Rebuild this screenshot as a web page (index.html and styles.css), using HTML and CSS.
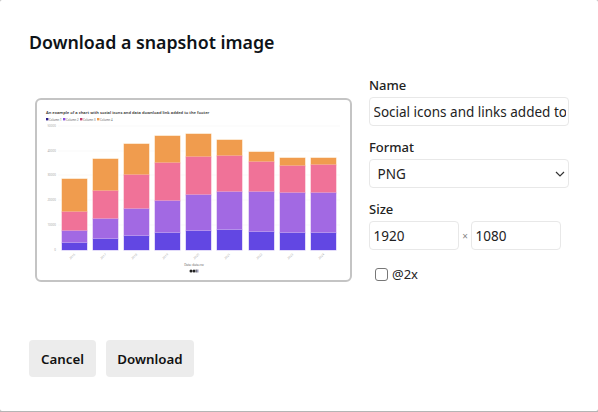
FILE: index.html
```html
<!DOCTYPE html>
<html lang="en">
<head>
<meta charset="utf-8">
<title>Download a snapshot image</title>
<link rel="stylesheet" href="styles.css">
</head>
<body>
<main class="dialog">
  <h1 class="title">Download a snapshot image</h1>
  <div class="content">
    <figure class="preview">
      <svg class="chart" viewBox="35 98 317 184" width="317" height="184" role="img">
        <text class="c-title" x="46" y="113.7">An example of a chart with social icons and data download link added to the footer</text>
        <g class="c-legend">
          <rect x="46" y="118" width="2.4" height="2.4" fill="#2a1a8a"/><text x="49" y="120.5">Column 1</text>
          <rect x="63" y="118" width="2.4" height="2.4" fill="#8a4fe0"/><text x="66" y="120.5">Column 2</text>
          <rect x="80" y="118" width="2.4" height="2.4" fill="#c0406f"/><text x="83" y="120.5">Column 3</text>
          <rect x="97" y="118" width="2.4" height="2.4" fill="#f09c4e"/><text x="100" y="120.5">Column 4</text>
        </g>
        <g class="c-grid">
          <line x1="58" x2="340" y1="126" y2="126"/><line x1="58" x2="340" y1="151" y2="151"/>
          <line x1="58" x2="340" y1="175" y2="175"/><line x1="58" x2="340" y1="200" y2="200"/>
          <line x1="58" x2="340" y1="225" y2="225"/>
        </g>
        <g class="c-axis" text-anchor="end">
          <text x="56" y="127">50000</text><text x="56" y="152">40000</text><text x="56" y="176">30000</text>
          <text x="56" y="201">20000</text><text x="56" y="226">10000</text><text x="56" y="251">0</text>
        </g>
        <g class="s-orange">
          <rect x="62" y="179" width="25" height="33"/><rect x="93" y="159" width="25" height="32"/>
          <rect x="124" y="144" width="25" height="31"/><rect x="155" y="136" width="25" height="27"/>
          <rect x="186" y="134" width="25" height="23"/><rect x="217" y="140" width="25" height="16"/>
          <rect x="249" y="152" width="25" height="10"/><rect x="280" y="158" width="25" height="8"/>
          <rect x="311" y="158" width="25" height="7"/>
        </g>
        <g class="s-pink">
          <rect x="62" y="212" width="25" height="19"/><rect x="93" y="191" width="25" height="28"/>
          <rect x="124" y="175" width="25" height="34"/><rect x="155" y="163" width="25" height="38"/>
          <rect x="186" y="157" width="25" height="38"/><rect x="217" y="156" width="25" height="36"/>
          <rect x="249" y="162" width="25" height="30"/><rect x="280" y="166" width="25" height="27"/>
          <rect x="311" y="165" width="25" height="28"/>
        </g>
        <g class="s-purple">
          <rect x="62" y="231" width="25" height="12"/><rect x="93" y="219" width="25" height="20"/>
          <rect x="124" y="209" width="25" height="27"/><rect x="155" y="201" width="25" height="32"/>
          <rect x="186" y="195" width="25" height="36"/><rect x="217" y="192" width="25" height="38"/>
          <rect x="249" y="192" width="25" height="40"/><rect x="280" y="193" width="25" height="40"/>
          <rect x="311" y="193" width="25" height="40"/>
        </g>
        <g class="s-dark">
          <rect x="62" y="243" width="25" height="7"/><rect x="93" y="239" width="25" height="11"/>
          <rect x="124" y="236" width="25" height="14"/><rect x="155" y="233" width="25" height="17"/>
          <rect x="186" y="231" width="25" height="19"/><rect x="217" y="230" width="25" height="20"/>
          <rect x="249" y="232" width="25" height="18"/><rect x="280" y="233" width="25" height="17"/>
          <rect x="311" y="233" width="25" height="17"/>
        </g>
        <g class="c-ticks" text-anchor="middle">
          <text transform="translate(73 257) rotate(-45)">2016</text><text transform="translate(104 257) rotate(-45)">2017</text>
          <text transform="translate(135 257) rotate(-45)">2018</text><text transform="translate(166 257) rotate(-45)">2019</text>
          <text transform="translate(197 257) rotate(-45)">2020</text><text transform="translate(228 257) rotate(-45)">2021</text>
          <text transform="translate(260 257) rotate(-45)">2022</text><text transform="translate(291 257) rotate(-45)">2023</text>
          <text transform="translate(322 257) rotate(-45)">2024</text>
        </g>
        <text class="c-source" x="194" y="266" text-anchor="middle">Data: data.csv</text>
        <circle cx="191" cy="271" r="1.5" fill="#222"/><circle cx="194" cy="271" r="1.5" fill="#222"/>
        <rect x="195.6" y="269.5" width="1.2" height="3" fill="#556"/><rect x="197.2" y="269.5" width="1.2" height="3" fill="#88a"/>
      </svg>
    </figure>
    <form class="fields">
      <label class="label" for="name">Name</label>
      <input class="input input-name" id="name" type="text" value="Social icons and links added to the footer">
      <label class="label" for="format">Format</label>
      <div class="select-wrap">
        <select class="input select" id="format"><option>PNG</option><option>SVG</option></select>
        <svg class="chevron" viewBox="0 0 10 6" width="10" height="6"><path d="M1 1l4 4 4-4" fill="none" stroke="#333" stroke-width="1.2"/></svg>
      </div>
      <label class="label" for="width">Size</label>
      <div class="size-row">
        <input class="input input-size" id="width" type="text" value="1920">
        <span class="times">×</span>
        <input class="input input-size" type="text" aria-label="Height" value="1080">
      </div>
      <label class="check"><input class="checkbox" type="checkbox"><span>@2x</span></label>
    </form>
  </div>
  <div class="actions">
    <button class="btn btn-cancel" type="button">Cancel</button>
    <button class="btn btn-download" type="button">Download</button>
  </div>
</main>
</body>
</html>
```
FILE: styles.css
```css
* { box-sizing: border-box; }
html, body { margin: 0; height: 100%; }
body { background: #b5b5b5; font-family: "Noto Sans", "Open Sans", sans-serif; color: #111; overflow: hidden; }
.dialog { height: 411px; background: #fff; padding: 30px 29px 0; display: flex; flex-direction: column; border-radius: 2px; }
.title { margin: 0; font-size: 17.8px; line-height: 24px; font-weight: 600; color: #0e1318; }
.content { display: flex; margin-top: 18px; align-items: flex-start; }
.preview { margin: 26px 0 0 6px; width: 317px; height: 184px; background: #fff; border: 2px solid #c4c4c4; border-radius: 6px; overflow: hidden; flex: none; }
.chart { display: block; margin: -2px 0 0 -2px; }
.c-title { font-size: 4.05px; font-weight: 600; fill: #333; }
.c-legend text { font-size: 2.8px; fill: #666; }
.c-grid line { stroke: #f0f0f0; stroke-width: .5; }
.c-axis text, .c-ticks text { font-size: 3px; fill: #aaa; }
.c-source { font-size: 3px; fill: #666; }
.s-orange rect, .s-pink rect, .s-purple rect, .s-dark rect { stroke-width: 1; paint-order: stroke; }
.s-orange rect { fill: #f09c4e; stroke: #f9cf9f; }
.s-pink rect { fill: #f07298; stroke: #f8aebf; }
.s-purple rect { fill: #a269e3; stroke: #cfb0f2; }
.s-dark rect { fill: #6247e3; stroke: #c6b8f5; }
.fields { margin: 4px 0 0 17px; width: 200px; display: flex; flex-direction: column; }
.label { font-size: 13px; line-height: 18px; font-weight: 500; color: #222; margin-bottom: 3px; }
.input { font-family: inherit; font-size: 13.5px; color: #222; height: 29px; border: 1.5px solid #e8e8e8; border-radius: 4px; background: #fff; padding: 0 2.5px 0 3.5px; outline: none; }
.input-name { width: 200px; margin-bottom: 12px; }
.select-wrap { position: relative; width: 200px; margin-bottom: 12px; }
.select { width: 100%; appearance: none; padding-left: 7.5px; display: block; }
.chevron { position: absolute; right: 4px; top: 12px; pointer-events: none; }
.size-row { display: flex; align-items: center; }
.input-size { width: 90px; }
.times { width: 12px; text-align: center; font-size: 10px; color: #888; }
.check { display: flex; align-items: center; gap: 4px; margin: 15px 0 0 6px; font-size: 13px; color: #222; }
.checkbox { appearance: none; margin: 0; width: 13px; height: 13px; border: 1.5px solid #777; border-radius: 3px; background: #fff; }
.actions { margin-top: auto; margin-bottom: 34px; display: flex; gap: 10px; }
.btn { font-family: inherit; font-size: 13.3px; font-weight: 600; color: #111; height: 37px; border: 0; border-radius: 4px; background: #ececec; padding: 0; }
.btn-cancel { width: 67px; }
.btn-download { width: 88px; }
```
